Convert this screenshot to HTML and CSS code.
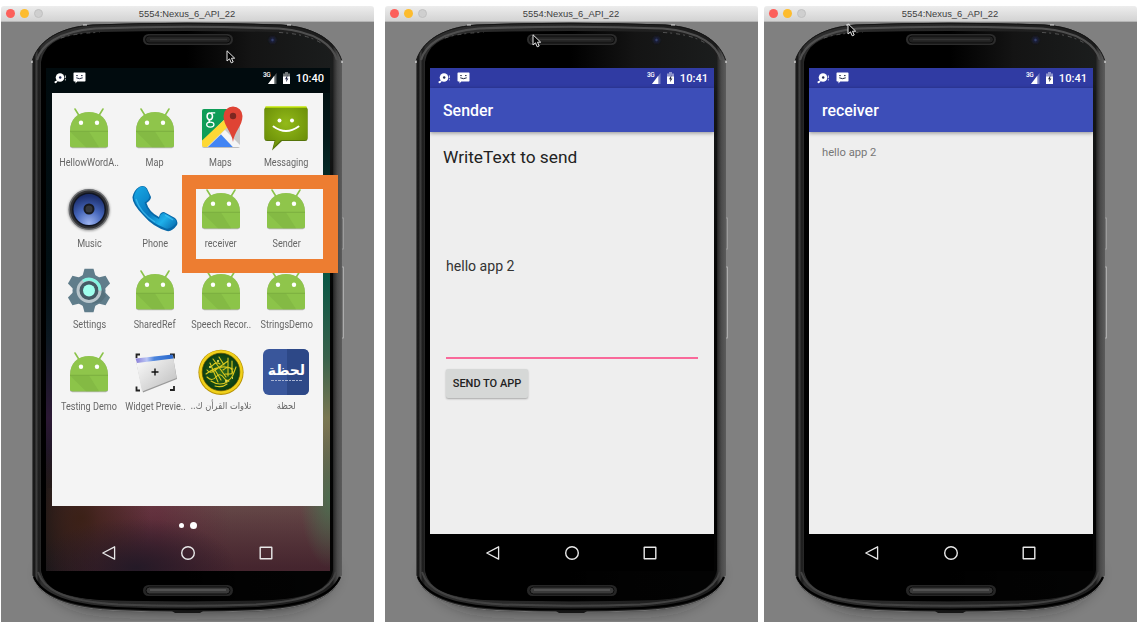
FILE: index.html
```
<!DOCTYPE html>
<html lang="en">
<head>
<meta charset="utf-8">
<title>Nexus 6 emulators</title>
<link rel="stylesheet" href="styles.css">
</head>
<body>
<svg class="defs" width="0" height="0" aria-hidden="true">
  <defs>
    <linearGradient id="rim" x1="31" x2="341" y1="0" y2="0" gradientUnits="userSpaceOnUse">
      <stop offset="0" stop-color="#5a5a5a"/><stop offset=".006" stop-color="#0c0c0c"/><stop offset=".014" stop-color="#404040"/><stop offset=".022" stop-color="#1a1a1a"/><stop offset=".03" stop-color="#2e2e2e"/>
      <stop offset=".97" stop-color="#1c1c1c"/><stop offset=".975" stop-color="#303030"/><stop offset=".985" stop-color="#4a4a4a"/><stop offset="1" stop-color="#5c5c5c"/>
    </linearGradient>
    <linearGradient id="face" x1="0" x2="1" y1="0" y2="0">
      <stop offset=".5" stop-color="#000"/><stop offset=".72" stop-color="#141414"/><stop offset="1" stop-color="#1b1d1d"/>
    </linearGradient>
    <linearGradient id="faceFade" x1="0" x2="0" y1="0" y2="1">
      <stop offset=".08" stop-color="#000" stop-opacity="0"/><stop offset=".45" stop-color="#000" stop-opacity=".85"/><stop offset="1" stop-color="#000" stop-opacity=".9"/>
    </linearGradient>
    <filter id="soft" x="-20%" y="-60%" width="140%" height="220%"><feGaussianBlur stdDeviation="9"/></filter>
    <filter id="dot" x="-50%" y="-50%" width="200%" height="200%"><feGaussianBlur stdDeviation=".8"/></filter>
    <filter id="edge" x="-5%" y="-10%" width="110%" height="120%"><feGaussianBlur stdDeviation=".7"/></filter>
    <radialGradient id="cone" cx=".5" cy=".95" r=".9"><stop offset="0" stop-color="#9db4f0"/><stop offset=".5" stop-color="#4667bb"/><stop offset="1" stop-color="#1b2d6b"/></radialGradient>
    <linearGradient id="handset" x1="0" x2="1" y1="0" y2="1"><stop offset="0" stop-color="#18a9e6"/><stop offset=".5" stop-color="#0877bd"/><stop offset=".75" stop-color="#1fb0ea"/><stop offset="1" stop-color="#0767aa"/></linearGradient>
    <radialGradient id="bubble" cx=".5" cy=".4" r=".7"><stop offset="0" stop-color="#93ba19"/><stop offset="1" stop-color="#668a06"/></radialGradient>
    <linearGradient id="sheet" x1="0" x2="1" y1="0" y2="1"><stop offset="0" stop-color="#fff"/><stop offset="1" stop-color="#bcbcbc"/></linearGradient>
    <linearGradient id="sheetBar" x1="0" x2="1" y1="0" y2="0"><stop offset="0" stop-color="#8a7fd6"/><stop offset=".3" stop-color="#b9c4f5"/><stop offset=".5" stop-color="#4b84dc"/><stop offset="1" stop-color="#2a68cc"/></linearGradient>
    <radialGradient id="seal"><stop offset="0" stop-color="#2f6a1c"/><stop offset="1" stop-color="#0b3d12"/></radialGradient>
  </defs>

  <symbol id="phone-body" viewBox="0 22 373 599">
    <path d="M42 570Q55 603 100 607Q186 612 273 607Q320 603 332 570z" fill="#222" opacity=".9" filter="url(#soft)"/>
    <rect x="339" y="218" width="3.500" height="31" fill="#777" stroke="#a5a5a5" stroke-width=".8"/>
    <rect x="339" y="267" width="3.500" height="71" fill="#777" stroke="#b8b8b8" stroke-width=".8"/>
    <path d="M31 62C35 45 52 27 92 24.500Q186 21 280 24.500C320 27 337 45 341 62V575C336 592 318 608 260 611Q186 614 112 611C54 608 36 592 31 575z" fill="url(#rim)"/>
    <path d="M31.500 60C36 45 53 27.500 92 25Q186 21.500 280 25C319 27.500 336 45 340.500 60" fill="none" stroke="#151515"/>
    <path d="M36 60C40 46 56 31.500 94 28.500Q186 25 278 28.500C316 31.500 332 46 336 60" fill="none" stroke="#505050" stroke-width="2.200" filter="url(#edge)"/>
    <path d="M31.500 576C37 592 55 607.500 112 610.500Q186 614 260 610.500C317 607.500 335 592 340.500 576" fill="none" stroke="#858585" stroke-width=".8"/>
    <path d="M33 577C39 591 57 605 115 608Q186 611 257 608C315 605 333 591 339 577" fill="none" stroke="#000" stroke-width="2.200"/>
    <path d="M37 572C42 588 59 601 117 604.500Q186 607 255 604.500C313 601 330 588 335 572" fill="none" stroke="#434343" stroke-width="2" filter="url(#edge)"/>
    <path d="M40 62C43 44 58 33.500 99 32Q186 30 273 32C314 33.500 329 44 332 62V570C329 586 316 597 272 600Q186 602.500 100 600C56 597 43 586 40 570z" fill="url(#face)"/>
    <path d="M40 62C43 44 58 33.500 99 32Q186 30 273 32C314 33.500 329 44 332 62V570C329 586 316 597 272 600Q186 602.500 100 600C56 597 43 586 40 570z" fill="url(#faceFade)"/>
    <path d="M60 38Q72 33.500 99 32.300M278 32.500Q306 34 320 43" fill="none" stroke="#777" stroke-width=".6" stroke-dasharray="4 3 2 4"/>
    <path d="M82 25h4M286 25h4M31 61v2M341 61v2" stroke="#ddd" stroke-width="1.200"/>
    <rect x="142" y="34" width="90" height="11" rx="5.500" fill="#2c2c2c"/><rect x="144.500" y="36" width="85" height="7" rx="3.500" fill="#222" stroke="#0a0a0a"/><path d="M149 39.500h77" stroke="#343434" stroke-width="1.500"/>
    <rect x="142" y="585" width="90" height="11" rx="5.500" fill="#262626"/><rect x="145" y="587" width="84" height="7" rx="3.500" fill="#3a3a3a" stroke="#0c0c0c"/><path d="M149 590h76" stroke="#525252" stroke-width="2"/>
    <circle cx="271.500" cy="40" r="3.200" fill="#1b2240" filter="url(#dot)"/><circle cx="271.500" cy="40" r="1.200" fill="#35406c"/>
    <path d="M171 611h31l-3 2h-25z" fill="#161616"/>
  </symbol>

  <symbol id="pointer" viewBox="0 0 10 14"><path d="M1 .8V11L3.500 8.800L5.200 12.800L7.200 12L5.500 8.200H8.700z" fill="#000" stroke="#e6e6e6"/></symbol>
  <symbol id="usb" viewBox="0 0 14 12"><circle cx="6" cy="5.500" r="4.300" fill="#fff"/><circle cx="6.200" cy="5.500" r="1.200" fill="#222b55"/><circle cx="1.600" cy="10.200" r="1.100" fill="#fff"/><path d="M3.500 8.500l-1.500 1.500" stroke="#fff" stroke-width="1.200"/><path d="M11.400 3.400v2.800M11.400 7.200v1.200" stroke="#fff" stroke-width="1" opacity=".8"/></symbol>
  <symbol id="sms" viewBox="0 0 13 12"><path d="M1.200.5h10.600q.7 0 .7.700v7.600q0 .7-.7.700H4.200L2.500 11.500V9.500H1.200q-.7 0-.7-.7V1.200q0-.7.700-.7z" fill="#fff"/><path d="M3.200 3.600h1.600M8 3.600h1.600M3.300 5.800q3.200 1.800 6.400 0" stroke="#222b45" fill="none" stroke-width="1"/></symbol>
  <symbol id="signal" viewBox="0 0 9 11"><path d="M8.500 0v11H0z" fill="#fff" opacity=".35"/><path d="M6.300 2.800V11H0z" fill="#fff"/></symbol>
  <symbol id="battery" viewBox="0 0 9 12"><path d="M3 0h3v1.500h2V12H1V1.500h2z" fill="#fff" opacity=".45"/><path d="M1 4.500h7V12H1z" fill="#fff"/><path d="M5.500 3L3 7.200h1.500L4 10.300l2.400-3.800H5z" fill="#1d2140"/></symbol>
  <symbol id="back" viewBox="0 0 16 16"><path d="M13.600 1.800V14.200L1.800 8z" fill="none" stroke="#e8e8e8" stroke-width="1.300" stroke-linejoin="round"/></symbol>
  <symbol id="home" viewBox="0 0 16 16"><circle cx="8" cy="8" r="6.300" fill="none" stroke="#e8e8e8" stroke-width="1.400"/></symbol>
  <symbol id="recent" viewBox="0 0 16 16"><rect x="2.200" y="2.200" width="11.600" height="11.600" rx=".4" fill="none" stroke="#e8e8e8" stroke-width="1.400"/></symbol>

  <symbol id="droid" viewBox="0 0 48 48">
    <path d="M10 5l4 6.500M38 5l-4 6.500" stroke="#8bc34a" stroke-width="1.600" stroke-linecap="round"/>
    <path d="M5 27C5 15 13 8.500 24 8.500S43 15 43 27V41.500Q43 44.200 40.500 44.200h-33Q5 44.200 5 41.500z" fill="#777" opacity=".5"/>
    <path d="M5 27C5 15 13 8 24 8S43 15 43 27V41Q43 43.300 40.500 43.300h-33Q5 43.300 5 41z" fill="#8fc54b"/>
    <path d="M5 27.500H43V41Q43 43.300 40.500 43.300H7.500Q5 43.300 5 41z" fill="#8cc449"/><path d="M5 27.500l16 15.800H34L24 27.500z" fill="#7bb03f" opacity=".5"/><path d="M5 27.300H43" stroke="#75a53c" stroke-width=".7"/>
    <circle cx="16" cy="18.700" r="2.200" fill="#fff"/><circle cx="32" cy="18.700" r="2.200" fill="#fff"/>
  </symbol>
  <symbol id="maps" viewBox="0 0 48 48">
    <rect x="5" y="6" width="38" height="38" rx="2" fill="#999" opacity=".6"/><rect x="5" y="5" width="38" height="38" rx="2" fill="#dcdcdc"/>
    <path d="M7 5H38L5 38V7q0-2 2-2z" fill="#0f9d58"/><path d="M26 25L43 42V20L32 14z" fill="#c9c9c9"/><path d="M5 36.500L30 13l3.500 7L10 43H7q-2 0-2-2z" fill="#fdd835"/><path d="M11 43L24 30.500 36 43z" fill="#4285f4"/><path d="M24 30l4-4 15 15v2h-7z" fill="#f5f5f5"/>
    <g fill="none" stroke="#fff"><ellipse cx="12.800" cy="12.300" rx="2.700" ry="3.400" stroke-width="1.500"/><path d="M14 8.900h4.200" stroke-width="1.100"/><path d="M13 15.700q-2 1.300 0 2.200" stroke-width="1.300"/><ellipse cx="13.300" cy="20.600" rx="3.600" ry="2.500" stroke-width="1.300"/></g>
    <path d="M36 38C35 28 26.500 22 26.500 12A9.500 9.500 0 0 1 45.500 12C45.500 22 37 28 36 38z" fill="#df4334"/><circle cx="36" cy="12" r="3.200" fill="#7d2720"/>
  </symbol>
  <symbol id="messaging" viewBox="0 0 48 48">
    <path d="M5 3.500H43Q45.500 3.500 45.500 6V34.500Q45.500 37 43 37H20L10 46.500L12.500 37H5Q2.500 37 2.500 34.500V6Q2.500 3.500 5 3.500z" fill="#56740a"/><path d="M5 3H43Q45.500 3 45.500 5V33.500Q45.500 36 43 36H19L11 44L13.500 36H5Q2.500 36 2.500 33.500V5Q2.500 3 5 3z" fill="url(#bubble)"/><path d="M3.500 3h41" stroke="#c6e80a" stroke-width="1.500"/>
    <circle cx="17.500" cy="16.500" r="2" fill="#fff"/><circle cx="30" cy="16.500" r="2" fill="#fff"/><path d="M11.500 22.500Q24 31.500 36.500 22.500" fill="none" stroke="#fff" stroke-width="2" stroke-linecap="round"/>
  </symbol>
  <symbol id="music" viewBox="0 0 48 48">
    <circle cx="24" cy="25" r="21" fill="#555" opacity=".5" filter="url(#dot)"/><circle cx="24" cy="24.500" r="19.700" fill="#303134" stroke="#6b6d70" stroke-width="1.500"/><circle cx="24" cy="24.500" r="17" fill="#101522"/><circle cx="24" cy="24.500" r="15.500" fill="url(#cone)"/><circle cx="24" cy="24" r="5.500" fill="#17191f"/><circle cx="24" cy="24" r="3.500" fill="#34373d"/>
  </symbol>
  <symbol id="phone" viewBox="0 0 48 48">
    <path d="M8 2Q13-.5 16 3.500L20 12Q20 15 15.500 18Q18 27 28 32Q29 27 33 27L44 33Q47.500 36 46 40Q41 47 36 46Q22 42 12 30Q1 19 1.500 12Q3 5 8 2z" fill="#0769a9"/><path d="M9 2Q13 .5 15.500 4L18.500 11Q18 15 13.500 17.500Q16 28 28 34Q29 28 33 28L43.500 34Q46 36 44.500 39Q39 44.500 35 43.500Q20 38 11.500 27.500Q3 18 3 12Q4 5 9 2z" fill="url(#handset)"/><path d="M5 14Q9 28 24 37M34 30l8 5" fill="none" stroke="#4cc8f6" stroke-width="1.300" opacity=".6"/>
  </symbol>
  <symbol id="settings" viewBox="0 0 48 48">
    <g fill="#607d8b"><circle cx="24" cy="24.500" r="16.500"/><path id="tooth" d="M19.500 2.800h9l2.500 9H17z"/><use href="#tooth" transform="rotate(60 24 24.500)"/><use href="#tooth" transform="rotate(120 24 24.500)"/><use href="#tooth" transform="rotate(180 24 24.500)"/><use href="#tooth" transform="rotate(240 24 24.500)"/><use href="#tooth" transform="rotate(300 24 24.500)"/></g>
    <path d="M34 17L41 30l-5 6-9 2z" fill="#4c6570" opacity=".5"/>
    <circle cx="24" cy="24.500" r="11" fill="#455a64" stroke="#b9c6cc" stroke-width="3"/><path d="M18 15A11 11 0 0 1 35 24.500" fill="none" stroke="#84f5e2" stroke-width="3"/><circle cx="24" cy="24.500" r="6" fill="#a0ffed"/>
  </symbol>
  <symbol id="widget" viewBox="0 0 48 48">
    <path d="M5.500 10V6.500h3.500M39 6.500h4v4M43 38v4h-4M9 42.500H5.500v-4" fill="none" stroke="#222" stroke-width="1.800"/><path d="M5 13L42 9L46 31L12 44.500z" fill="#999"/><path d="M4.500 11L42 7.500L45.500 30L11 43.500z" fill="url(#sheet)"/><path d="M4.500 10.500L41.500 6.500l.8 4L6 15z" fill="url(#sheetBar)"/><path d="M24 20.500v7M20.500 24h7" stroke="#111" stroke-width="1.400"/>
  </symbol>
  <symbol id="quran" viewBox="0 0 48 48">
    <circle cx="24" cy="24.300" r="22.600" fill="#b79205"/><circle cx="24" cy="24" r="21.800" fill="#f0d01a"/><circle cx="24" cy="24" r="18.800" fill="url(#seal)" stroke="#574a00" stroke-width=".7"/>
    <g fill="none" stroke="#dcc91e" stroke-width="1.100" stroke-linecap="round"><path d="M10 29q5 5 9 0t8 1t9-3l3-8M10 22q3 4 7 1l14-10M16 11l13 18M13 15l8 19M22 9l5 8M31 10v18M35 13v13M9 26q14-11 27-5M14 33q9 6 18 0M15 18q4-5 8-2M18 38q7 2 12-2M26 22q6-5 9 0t-7 4M18 22l6 10"/></g><path d="M12 19h2M20 13h2M28 33h2M35 30h1" stroke="#fff36a" stroke-width="1.300"/>
  </symbol>
  <symbol id="tile" viewBox="0 0 48 48">
    <rect x="1" y="1" width="46" height="46" rx="6" fill="#39569b"/><path d="M25 1H41q6 0 6 6V41q0 6-6 6H25z" fill="#2d4887"/><path d="M9 32.500h32" stroke="#a9b5d4" stroke-width="1.200" stroke-dasharray="3 1 2 1"/>
  </symbol>
</svg>

<main class="desk">
  <section class="window">
    <header class="titlebar"><i class="light red"></i><i class="light amber"></i><i class="light off"></i><span class="caption">5554:Nexus_6_API_22</span></header>
    <div class="stage">
      <svg class="shell"><use href="#phone-body"/></svg>
      <div class="screen launcher">
        <div class="status"><svg class="i-usb"><use href="#usb"/></svg><svg class="i-sms"><use href="#sms"/></svg><span class="net">3G</span><svg class="i-signal"><use href="#signal"/></svg><svg class="i-battery"><use href="#battery"/></svg><time>10:40</time></div>
        <div class="drawer">
          <div class="app"><svg><use href="#droid"/></svg><span>HellowWordA..</span></div>
          <div class="app"><svg><use href="#droid"/></svg><span>Map</span></div>
          <div class="app"><svg><use href="#maps"/></svg><span>Maps</span></div>
          <div class="app"><svg><use href="#messaging"/></svg><span>Messaging</span></div>
          <div class="app"><svg><use href="#music"/></svg><span>Music</span></div>
          <div class="app"><svg><use href="#phone"/></svg><span>Phone</span></div>
          <div class="app"><svg><use href="#droid"/></svg><span>receiver</span></div>
          <div class="app"><svg><use href="#droid"/></svg><span>Sender</span></div>
          <div class="app"><svg><use href="#settings"/></svg><span>Settings</span></div>
          <div class="app"><svg><use href="#droid"/></svg><span>SharedRef</span></div>
          <div class="app"><svg><use href="#droid"/></svg><span>Speech Recor..</span></div>
          <div class="app"><svg><use href="#droid"/></svg><span>StringsDemo</span></div>
          <div class="app"><svg><use href="#droid"/></svg><span>Testing Demo</span></div>
          <div class="app"><svg><use href="#widget"/></svg><span>Widget Previe..</span></div>
          <div class="app"><svg><use href="#quran"/></svg><span class="arabic" lang="ar" dir="rtl">تلاوات القرأن ك..</span></div>
          <div class="app"><svg><use href="#tile"/></svg><b class="logo" lang="ar" dir="rtl">لحظة</b><span class="arabic" lang="ar" dir="rtl">لحظة</span></div>
        </div>
        <div class="pages"><i class="page"></i><i class="page current"></i></div>
        <nav class="keys"><svg><use href="#back"/></svg><svg><use href="#home"/></svg><svg><use href="#recent"/></svg></nav>
      </div>
      <div class="highlight"></div>
      <svg class="pointer p1"><use href="#pointer"/></svg>
    </div>
  </section>

  <section class="window">
    <header class="titlebar"><i class="light red"></i><i class="light amber"></i><i class="light off"></i><span class="caption">5554:Nexus_6_API_22</span></header>
    <div class="stage">
      <svg class="shell"><use href="#phone-body"/></svg>
      <div class="screen">
        <div class="status blue"><svg class="i-usb"><use href="#usb"/></svg><svg class="i-sms"><use href="#sms"/></svg><span class="net">3G</span><svg class="i-signal"><use href="#signal"/></svg><svg class="i-battery"><use href="#battery"/></svg><time>10:41</time></div>
        <h1 class="toolbar">Sender</h1>
        <div class="content sender">
          <p class="prompt">WriteText to send</p>
          <div class="field">hello app 2</div>
          <button class="send">SEND TO APP</button>
        </div>
        <nav class="keys"><svg><use href="#back"/></svg><svg><use href="#home"/></svg><svg><use href="#recent"/></svg></nav>
      </div>
      <svg class="pointer p2"><use href="#pointer"/></svg>
    </div>
  </section>

  <section class="window">
    <header class="titlebar"><i class="light red"></i><i class="light amber"></i><i class="light off"></i><span class="caption">5554:Nexus_6_API_22</span></header>
    <div class="stage">
      <svg class="shell"><use href="#phone-body"/></svg>
      <div class="screen">
        <div class="status blue"><svg class="i-usb"><use href="#usb"/></svg><svg class="i-sms"><use href="#sms"/></svg><span class="net">3G</span><svg class="i-signal"><use href="#signal"/></svg><svg class="i-battery"><use href="#battery"/></svg><time>10:41</time></div>
        <h1 class="toolbar">receiver</h1>
        <div class="content"><p class="message">hello app 2</p></div>
        <nav class="keys"><svg><use href="#back"/></svg><svg><use href="#home"/></svg><svg><use href="#recent"/></svg></nav>
      </div>
      <svg class="pointer p3"><use href="#pointer"/></svg>
    </div>
  </section>
</main>
</body>
</html>
```
FILE: styles.css
```
* { box-sizing: border-box; }
body { margin: 0; background: #fff; font-family: Roboto, "Noto Sans", sans-serif; overflow: hidden; }
.defs { position: absolute; }
svg { display: block; flex: none; }
p, h1 { margin: 0; }

.desk { display: grid; grid-template-columns: 373px 373px 373px; column-gap: 11px; padding: 6px 0 0 1px; height: 625px; }
.window:nth-child(3) { margin-left: -5px; margin-right: 5px; }
.window { display: flex; flex-direction: column; height: 616px; border-radius: 3px 3px 0 0; overflow: hidden; }

.titlebar { display: flex; align-items: center; height: 16px; padding-left: 5px; gap: 5px; background: linear-gradient(#ededed, #d3d3d3); border-bottom: 1px solid #b5b5b5; }
.light { width: 9px; height: 9px; border-radius: 50%; flex: none; }
.red { background: #fc605b; }
.amber { background: #fdbc2e; }
.off { background: #cfcfcf; border: 1px solid #c0c0c0; }
.caption { flex: 1; padding-right: 48px; text-align: center; font: 9.400px/15px "Liberation Sans", Arial, sans-serif; color: #404040; }

.stage { position: relative; flex: 1; background: #808080; padding: 46px 0 0 45px; }
.shell { position: absolute; left: 0; top: 0; width: 373px; height: 599px; }
.screen { position: relative; display: flex; flex-direction: column; width: 284px; height: 503px; background: #000; }
.launcher {
  background:
    radial-gradient(ellipse 30px 70px at 284px 430px, rgba(75, 112, 80, .9), transparent),
    radial-gradient(ellipse 100px 50px at 90px 500px, rgba(32, 25, 38, .9), transparent),
    radial-gradient(ellipse 70px 80px at 35px 450px, rgba(58, 32, 20, .9), transparent),
    linear-gradient(90deg, #15161a, rgba(20, 20, 26, 0) 18%) 0 420px / 100% 83px no-repeat,
    linear-gradient(#010b0e, #020f13 200px, #0c1820 270px, #2b1834 350px, #15161a 420px) 0 0 / 10px 420px no-repeat,
    linear-gradient(rgba(0, 0, 0, 0) 425px, rgba(45, 20, 32, .6) 500px),
    linear-gradient(90deg, rgba(110, 35, 60, .5) 40%, rgba(0, 0, 0, 0) 65%) 0 430px / 100% 73px no-repeat,
    linear-gradient(#010b0e, #010b0e) 0 0 / 100% 25px no-repeat,
    linear-gradient(#010b0e, #031a1b 70px, #0b5745 210px, #39624c 290px, #7a7852 350px, #6b4e4c 435px, #693e43);
}

.status { display: flex; align-items: center; height: 20px; padding: 0 6px 0 8px; color: #fff; }
.blue { background: #303ba3; }
.i-usb { width: 14px; height: 12px; }
.i-sms { width: 13px; height: 12px; margin-left: 5px; }
.net { margin: -7px 0 0 auto; font-size: 6.500px; line-height: 8px; font-weight: 500; letter-spacing: -.4px; }
.i-signal { width: 9px; height: 11px; margin-left: -2.500px; }
.i-battery { width: 9px; height: 12px; margin: 0 5px 0 5px; }
.status time { font-size: 11.100px; font-weight: 500; line-height: 21px; }

.drawer { display: grid; grid-template-columns: repeat(4, 65.700px); grid-auto-rows: 81.200px; width: 271px; height: 413px; margin: 5px 0 0 6px; padding: 11px 0 0 4.500px; background: #f4f4f4; align-content: start; }
.app { position: relative; display: flex; flex-direction: column; align-items: center; }
.app svg { width: 48px; height: 48px; }
.app span { margin-top: 4px; font-size: 10.700px; line-height: 13px; white-space: nowrap; color: #666; transform: scaleX(.85); }
.app .arabic { margin-top: 3px; font-family: "DejaVu Sans", sans-serif; font-size: 9.800px; }
/* Wordmark over the tile icon */
.logo { position: absolute; top: 12px; font: 700 14px/20px "DejaVu Sans", sans-serif; color: #fff; }
.pages { display: flex; align-items: center; justify-content: center; gap: 6px; height: 38px; }
.page { width: 5px; height: 5px; border-radius: 50%; background: #fff; }
.current { width: 7px; height: 7px; }

.keys { display: flex; justify-content: space-between; align-items: center; height: 37px; margin-top: auto; padding: 0 56px 0 55px; }
.launcher .keys { margin-top: -10px; }
.keys svg { width: 16px; height: 16px; }

.toolbar { height: 44px; padding-left: 13px; font-size: 15.900px; font-weight: 500; line-height: 45px; color: #fff; background: #3d4eb8; box-shadow: 0 1px 4px rgba(0, 0, 0, .4); z-index: 1; }
.content { flex: 1; padding: 15px 13px 0; background: #eee; }
.prompt { font-size: 17.300px; line-height: 20px; color: #222; }
.field { display: flex; align-items: center; height: 192px; margin: 0 3px; padding-top: 8px; border-bottom: 2px solid #f9699a; font-size: 14.100px; color: #333; }
.send { display: block; width: 82px; height: 29px; margin: 10px 0 0 3px; padding: 0; border: 0; border-radius: 2px; background: #d6d8d7; box-shadow: 0 1px 2px rgba(0, 0, 0, .3); font: 500 11px Roboto, sans-serif; color: #222; }
.message { font-size: 11.200px; line-height: 12px; color: #777; }

/* Annotation frame and pointers lie over the phones */
.highlight { position: absolute; left: 181px; top: 153px; width: 156px; height: 98px; border: 14px solid #ed7d31; border-right-width: 15px; }
.pointer { position: absolute; width: 10px; height: 14px; }
.p1 { left: 225px; top: 28px; }
.p2 { left: 147px; top: 12px; }
.p3 { left: 83px; top: 1px; }
```
